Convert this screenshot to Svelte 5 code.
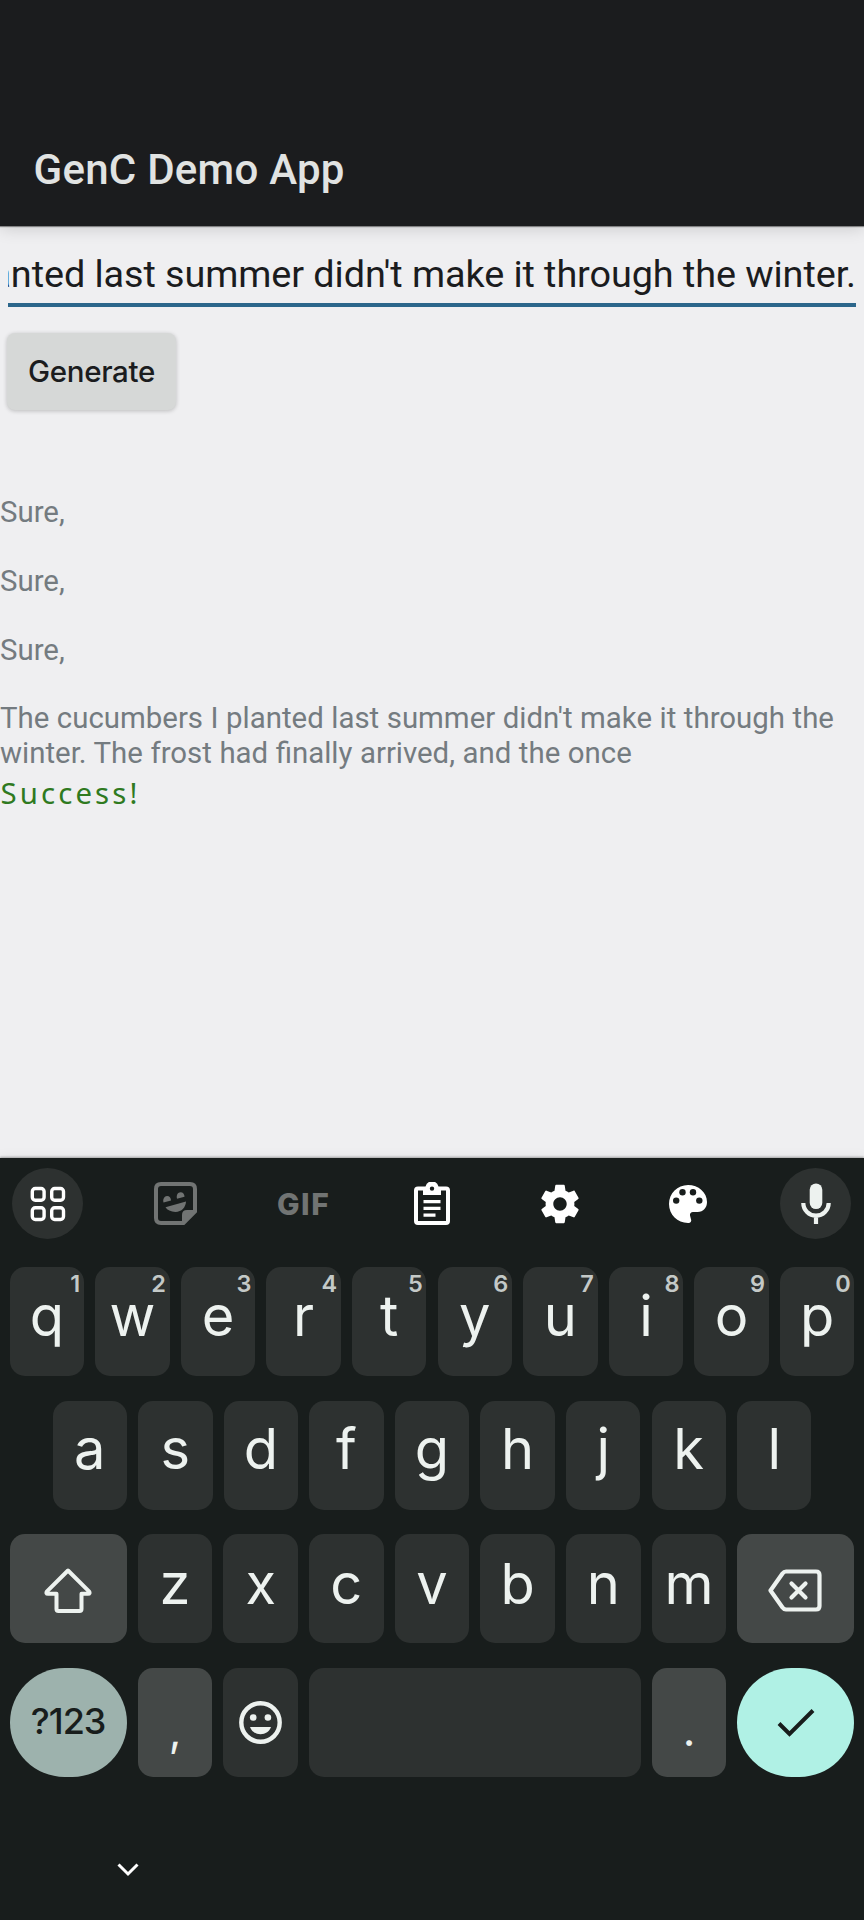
<script>
  const topRow = 'qwertyuiop'.split('').map((letter, i) => ({ letter, hint: String((i + 1) % 10) }));
  const homeRow = 'asdfghjkl'.split('');
  const bottomRow = 'zxcvbnm'.split('');
  const output = ['Sure,', 'Sure,', 'Sure,', "The cucumbers I planted last summer didn't make it through the winter. The frost had finally arrived, and the once"];
</script>

<div class="screen">
  <header><h1>GenC Demo App</h1></header>

  <main>
    <div class="field"><span>anted last summer didn't make it through the winter.</span></div>
    <button class="generate">Generate</button>
    <div class="output">
      {#each output as line}
        <p>{line}</p>
      {/each}
    </div>
    <div class="status">Success!</div>
  </main>

  <section class="keyboard">
    <div class="toolbar">
      <div class="tool round">
        <svg width="36" height="36" viewBox="0 0 36 36" fill="none" stroke="#fff" stroke-width="3.4">
          <rect x="2.3" y="2.5" width="11.8" height="11.8" rx="3" />
          <rect x="21.7" y="2.5" width="11.8" height="11.8" rx="3" />
          <rect x="2.3" y="21.7" width="11.8" height="11.8" rx="3" />
          <rect x="21.7" y="21.7" width="11.8" height="11.8" rx="3" />
        </svg>
      </div>
      <div class="tool">
        <svg width="43" height="43" viewBox="0 0 43 43" fill="#717473">
          <path d="M7 2H36Q41 2 41 7V29.5L29.500 41H7Q2 41 2 36V7Q2 2 7 2Z" fill="none" stroke="#717473" stroke-width="4" />
          <path d="M28 42V33Q28 28 33 28H42V30L30 42Z" />
          <path d="M11.500 25.300L32 19.600C31.700 25.500 27.500 30 21.500 30C16.800 30 13.200 28 11.500 25.300Z" />
          <path d="M9.500 20.500C8.500 17 10.500 14 13 14C15.500 14 17 16 17 18.600Z" />
          <path d="M23 16.700C22 13 24 10.200 26.500 10.200C29 10.200 30.500 12.300 30.500 14.800Z" />
        </svg>
      </div>
      <div class="tool gif">GIF</div>
      <div class="tool">
        <svg width="36" height="43" viewBox="0 0 36 43" fill="#fff">
          <path fill-rule="evenodd" d="M4 4.500H11.500A6.700 6.700 0 0 1 24.500 4.500H32Q36 4.500 36 8.500V39Q36 43 32 43H4Q0 43 0 39V8.500Q0 4.500 4 4.500ZM4 8.500V39H32V8.500H27V13H9V8.500ZM18 4.400A2.200 2.200 0 1 0 18 8.800A2.200 2.200 0 1 0 18 4.400Z" />
          <path d="M9.500 18H26.500V21.300H9.500ZM9.500 24.700H26.500V28H9.500ZM9.500 31.500H21.500V34.800H9.500Z" />
        </svg>
      </div>
      <div class="tool">
        <svg width="46" height="46" viewBox="0 0 24 24" fill="#fff">
          <path d="M19.430 12.980c.04-.32.07-.64.07-.98s-.03-.66-.07-.98l2.110-1.650c.19-.15.24-.42.12-.64l-2-3.460c-.12-.22-.39-.3-.61-.22l-2.490 1c-.52-.4-1.080-.73-1.690-.98l-.38-2.650C14.460 2.180 14.250 2 14 2h-4c-.25 0-.46.18-.49.42l-.38 2.650c-.61.25-1.170.59-1.690.98l-2.490-1c-.23-.09-.49 0-.61.22l-2 3.460c-.13.22-.07.49.12.64l2.110 1.650c-.04.32-.07.65-.07.98s.03.66.07.98l-2.110 1.650c-.19.15-.24.42-.12.64l2 3.460c.12.22.39.3.61.22l2.490-1c.52.4 1.080.73 1.690.98l.38 2.650c.03.24.24.42.49.42h4c.25 0 .46-.18.49-.42l.38-2.650c.61-.25 1.170-.59 1.690-.98l2.490 1c.23.09.49 0 .61-.22l2-3.460c.12-.22.07-.49-.12-.64l-2.110-1.650zM12 15.500c-1.930 0-3.500-1.570-3.500-3.500s1.570-3.500 3.500-3.500 3.500 1.570 3.500 3.500-1.570 3.500-3.500 3.500z" />
        </svg>
      </div>
      <div class="tool">
        <svg width="38" height="38" viewBox="0 0 38 38">
          <path fill="#fff" d="M19 0C8.500 0 0 8.500 0 19S8.500 38 19 38H19.500C21.500 38 22.500 36.500 22.200 35L21 30.500C20.700 28.300 22 27 24 27H28.500C34.500 27 38 22.500 38 17C38 7.500 29.500 0 19 0Z" />
          <g fill="#181d1c"><circle cx="7.200" cy="15.600" r="3.200" /><circle cx="13.500" cy="7.300" r="3.200" /><circle cx="24" cy="7.300" r="3.200" /><circle cx="30.300" cy="15.600" r="3.200" /></g>
        </svg>
      </div>
      <div class="tool round">
        <svg width="30" height="42" viewBox="0 0 30 42">
          <rect x="8.700" y="0.500" width="12.600" height="25.500" rx="6.300" fill="#edf2ef" />
          <path d="M2.300 20A12.700 12.700 0 0 0 27.700 20M15 32.500V41" fill="none" stroke="#edf2ef" stroke-width="4.200" />
        </svg>
      </div>
    </div>

    <div class="row">
      {#each topRow as key}
        <div class="key">{key.letter}<span class="hint">{key.hint}</span></div>
      {/each}
    </div>
    <div class="row home">
      {#each homeRow as letter}
        <div class="key">{letter}</div>
      {/each}
    </div>
    <div class="row lower">
      <div class="key wide alt action">
        <svg width="48" height="46" viewBox="0 0 48 46" fill="none" stroke="#edf2ef" stroke-width="4" stroke-linejoin="round">
          <path d="M24 2.500L45 23.300Q46.500 25.800 44 25.800H37.500V41Q37.500 43 35.500 43H14.500Q12.500 43 12.500 41V25.800H4Q1.500 25.800 3 23.300Z" />
        </svg>
      </div>
      {#each bottomRow as letter}
        <div class="key">{letter}</div>
      {/each}
      <div class="key wide alt action erase">
        <svg width="54" height="43" viewBox="0 0 54 43" fill="none" stroke="#edf2ef" stroke-width="4.200" stroke-linejoin="round" stroke-linecap="round">
          <path d="M18 2.500H48Q51.500 2.500 51.500 6V37Q51.500 40.500 48 40.500H18Q16 40.500 14.500 38.500L2.500 21.500L14.500 4.500Q16 2.500 18 2.500Z" />
          <path d="M23.500 14.500L37.500 28.500M37.500 14.500L23.500 28.500" />
        </svg>
      </div>
    </div>
    <div class="row">
      <div class="key wide symbols">?123</div>
      <div class="key alt punct">,</div>
      <div class="key icon">
        <svg width="43" height="43" viewBox="0 0 43 43" fill="#edf2ef">
          <circle cx="21.500" cy="21.500" r="19.200" fill="none" stroke="#edf2ef" stroke-width="4.400" />
          <circle cx="14.200" cy="16.500" r="3.300" /><circle cx="28.900" cy="16.500" r="3.300" />
          <path d="M11 26H32C30.500 30.500 26.500 33.200 21.500 33.200S12.500 30.500 11 26Z" />
        </svg>
      </div>
      <div class="key space"></div>
      <div class="key alt punct">.</div>
      <div class="key wide enter">
        <svg width="38" height="30" viewBox="0 0 38 30" fill="none" stroke="#181d1c" stroke-width="4"><path d="M2 15.500L12.500 26L36 2.500" /></svg>
      </div>
    </div>

    <nav>
      <svg width="22" height="14" viewBox="0 0 22 14" fill="none" stroke="#fff" stroke-width="3"><path d="M1.500 1.500L11 11L20.500 1.500" /></svg>
    </nav>
  </section>
</div>

<style>
  :global(body) { margin: 0; }
  .screen {
    width: 864px; height: 1920px; overflow: hidden; display: flex; flex-direction: column;
    background: #efeff1; font-family: Roboto, sans-serif;
  }
  header {
    box-sizing: border-box; height: 226px; flex: none; display: flex; align-items: flex-end; padding: 0 33.6px 28px;
    background: #1b1c1e; box-shadow: 0 1px 1px rgba(0, 0, 0, .4), 0 2px 16px rgba(0, 0, 0, .16);
  }
  h1 { margin: 0; font-size: 42px; line-height: 56px; font-weight: 500; letter-spacing: .25px; color: #e1e3e2; }
  main { height: 931.500px; flex: none; display: flex; flex-direction: column; align-items: flex-start; box-sizing: border-box; padding-top: 24px; }
  .field {
    box-sizing: border-box; width: 848px; height: 57px; margin-left: 8px; overflow: hidden; display: flex; justify-content: flex-end;
    border-bottom: 4px solid #2b668b; font-size: 37.800px; line-height: 48px; letter-spacing: -.08px; color: #1b1c1e; white-space: nowrap;
  }
  .generate {
    width: 169px; height: 77px; margin: 26px 0 0 7px; padding: 0 0 1px; border: 0; border-radius: 8px; background: #d6d8d7;
    box-shadow: 0 1px 4px rgba(0, 0, 0, .22); font: 500 29.500px/76px Inter, sans-serif; letter-spacing: -.35px; color: #1b1c1e;
  }
  .output { margin-top: 85px; font-size: 29.400px; line-height: 34.400px; word-spacing: .25px; color: #747b80; }
  .output p { margin: 0 0 34.400px; }
  .output p:last-child { margin: 0; }
  .status { margin: 6px 0 0 .5px; font: 29.400px/34.400px "Noto Sans", sans-serif; letter-spacing: 3.100px; color: #2f7a1f; }

  .keyboard { flex: 1; background: #181d1c; box-shadow: 0 -1px 2px rgba(0, 0, 0, .3), 0 0 12px rgba(0, 0, 0, .08); font-family: Inter, sans-serif; }
  .toolbar { display: flex; justify-content: space-between; padding: 10.500px 12.500px 28px 12px; }
  .tool { width: 71px; height: 71px; display: flex; align-items: center; justify-content: center; }
  .round { border-radius: 50%; background: #2d3130; }
  .gif { font-size: 30px; font-weight: 800; letter-spacing: 1.500px; color: #717473; }
  .row { display: flex; gap: 11.200px; padding: 0 9.600px; margin-bottom: 24.600px; }
  .home { padding: 0 52.600px; }
  .key {
    position: relative; box-sizing: border-box; flex: 1 1 0; height: 109px; display: flex; align-items: center; justify-content: center;
    padding-bottom: 10.500px; border-radius: 15px; background: #2d3130; color: #edf2ef; font-size: 56px; line-height: 68px;
  }
  .home .key { padding-bottom: 12px; }
  .lower .key { padding-bottom: 9px; }
  .hint { position: absolute; top: 5px; right: 4px; font-size: 23.500px; line-height: 24px; font-weight: 600; letter-spacing: -.3px; color: #c4c9c7; }
  .wide { flex: 0 0 117px; }
  .alt { background: #444847; }
  .lower .action { padding: 4px 0 0; }
  .lower .erase { padding-right: 2px; }
  .symbols { padding-bottom: 3px; border-radius: 55px; background: #9db2ad; color: #181d1c; font-size: 36px; font-weight: 500; letter-spacing: -1px; }
  .punct { flex: 0 0 74.500px; font-size: 44px; padding: 16px 0 0; }
  .icon { flex: 0 0 74.500px; padding: 0; }
  .enter { padding: 2px 0 0; border-radius: 55px; background: #b0f1e5; }
  nav { padding: 62px 0 0 117px; }
  nav svg { display: block; }
</style>
